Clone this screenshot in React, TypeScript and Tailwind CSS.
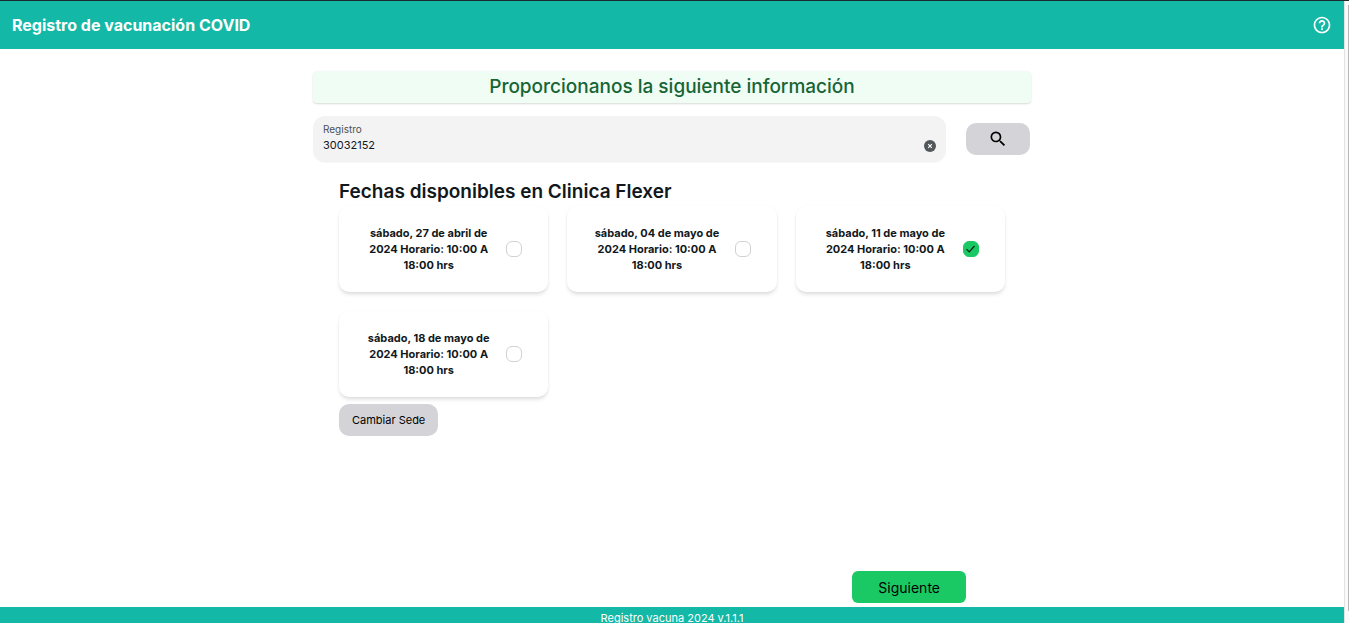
import { useState } from "react";

const DATES = [
  "sábado, 27 de abril de 2024 Horario: 10:00 A 18:00 hrs",
  "sábado, 04 de mayo de 2024 Horario: 10:00 A 18:00 hrs",
  "sábado, 11 de mayo de 2024 Horario: 10:00 A 18:00 hrs",
  "sábado, 18 de mayo de 2024 Horario: 10:00 A 18:00 hrs",
];

function HelpIcon() {
  return (
    <svg viewBox="0 0 24 24" className="size-5" fill="currentColor" aria-hidden="true">
      <path d="M11 18h2v-2h-2v2zm1-16C6.48 2 2 6.48 2 12s4.48 10 10 10 10-4.48 10-10S17.52 2 12 2zm0 18c-4.41 0-8-3.59-8-8s3.59-8 8-8 8 3.59 8 8-3.59 8-8 8zm0-14c-2.21 0-4 1.79-4 4h2c0-1.1.9-2 2-2s2 .9 2 2c0 2-3 1.75-3 5h2c0-2.25 3-2.5 3-5 0-2.21-1.79-4-4-4z" />
    </svg>
  );
}

function SearchIcon() {
  return (
    <svg viewBox="0 0 24 24" className="size-5" fill="currentColor" aria-hidden="true">
      <path d="M15.5 14h-.79l-.28-.27A6.47 6.47 0 0 0 16 9.5 6.5 6.5 0 1 0 9.5 16c1.61 0 3.09-.59 4.23-1.57l.27.28v.79l5 4.99L20.49 19l-4.99-5zm-6 0C7.01 14 5 11.99 5 9.5S7.01 5 9.5 5 14 7.01 14 9.5 11.99 14 9.5 14z" />
    </svg>
  );
}

function ClearIcon() {
  return (
    <svg viewBox="0 0 12 12" className="size-3" aria-hidden="true">
      <circle cx="6" cy="6" r="6" fill="#52575a" />
      <path d="M4.2 4.2l3.6 3.6M7.8 4.2L4.2 7.8" stroke="#fff" strokeWidth="1.1" />
    </svg>
  );
}

function DateCard({ text, checked, onSelect }: { text: string; checked: boolean; onSelect: () => void }) {
  return (
    <label className="flex cursor-pointer items-center gap-3.5 rounded-[10px] bg-white px-[26px] py-[19px] shadow-[0_3px_4px_-1px_rgba(0,0,0,0.15),0_0_2px_rgba(0,0,0,0.04)]">
      <span className="flex-1 text-center text-[11px] leading-4 font-bold">{text}</span>
      <span className="relative grid size-4 shrink-0 place-items-center">
        <input
          type="checkbox"
          checked={checked}
          onChange={onSelect}
          className="size-4 appearance-none rounded-md border border-[#d0d1d2] bg-white checked:border-[#1bc964] checked:bg-[#1bc964]"
        />
        {checked && (
          <svg viewBox="0 0 16 16" className="pointer-events-none absolute inset-0 size-4" fill="none" aria-hidden="true">
            <path d="M3.5 8.2L6.3 10.9L11.5 5" stroke="#0b2a18" strokeWidth="1.3" />
          </svg>
        )}
      </span>
    </label>
  );
}

export default function App() {
  const [selected, setSelected] = useState(2);
  const [record, setRecord] = useState("30032152");

  return (
    <div className="flex min-h-screen border-t border-[#1d2b2f] bg-white font-['Inter',sans-serif] text-[#11181c]">
      <div className="flex min-w-0 flex-1 flex-col">
        <header className="flex h-12 items-center justify-between bg-[#14b8a6] px-3 text-white">
          <h1 className="text-base font-bold">Registro de vacunación COVID</h1>
          <button type="button" aria-label="Ayuda">
            <HelpIcon />
          </button>
        </header>

        <main className="mx-auto flex w-full max-w-[718px] flex-1 flex-col pt-[22px]">
          <h2 className="rounded bg-[#f0fdf4] text-center text-[19px] leading-8 font-medium text-[#166534] shadow-[0_1px_2px_rgba(0,0,0,0.15)]">
            Proporcionanos la siguiente información
          </h2>

          <div className="mt-[13px] flex items-center gap-5 pr-px">
            <div className="flex flex-1 items-end rounded-xl bg-[#f3f3f3] px-2.5 pt-[7px] pb-[7px] shadow-[0_1px_1px_rgba(0,0,0,0.03)]">
              <div className="flex flex-1 flex-col">
                <label htmlFor="registro" className="text-[10px] leading-3 text-[#4b5054]">
                  Registro
                </label>
                <input
                  id="registro"
                  value={record}
                  onChange={(e) => setRecord(e.target.value)}
                  className="h-5 w-full bg-transparent text-[11px] outline-none"
                />
              </div>
              <button type="button" aria-label="Borrar" onClick={() => setRecord("")} className="mb-[3px]">
                <ClearIcon />
              </button>
            </div>
            <button type="button" aria-label="Buscar" className="grid h-8 w-16 place-items-center rounded-[10px] bg-[#d4d4d8] text-black">
              <SearchIcon />
            </button>
          </div>

          <section className="mt-4 px-[26px]">
            <h3 className="text-[19px] leading-7 font-semibold">Fechas disponibles en Clinica Flexer</h3>
            <div className="grid grid-cols-3 gap-[19px]">
              {DATES.map((text, i) => (
                <DateCard key={text} text={text} checked={selected === i} onSelect={() => setSelected(i)} />
              ))}
            </div>
            <button type="button" className="mt-[7px] h-8 rounded-[10px] bg-[#d4d4d8] px-[13px] text-[11px] text-black">
              Cambiar Sede
            </button>
          </section>

          <div className="mt-auto mb-1 flex justify-end pr-[65px]">
            <button type="button" className="h-8 rounded-md bg-[#1bc964] px-[26px] text-[14px] text-black">
              Siguiente
            </button>
          </div>
        </main>

        <footer className="h-4 bg-[#14b8a6] text-center text-[11px] leading-[22px] text-white [overflow:clip]">
          Registro vacuna 2024 v.1.1.1
        </footer>
      </div>

      <div className="flex w-[5px] justify-end border-l border-[#e2e2e2] bg-[#fafafa] pt-1 pb-3" aria-hidden="true">
        <div className="w-px bg-[#b9b9b9]" />
      </div>
    </div>
  );
}
